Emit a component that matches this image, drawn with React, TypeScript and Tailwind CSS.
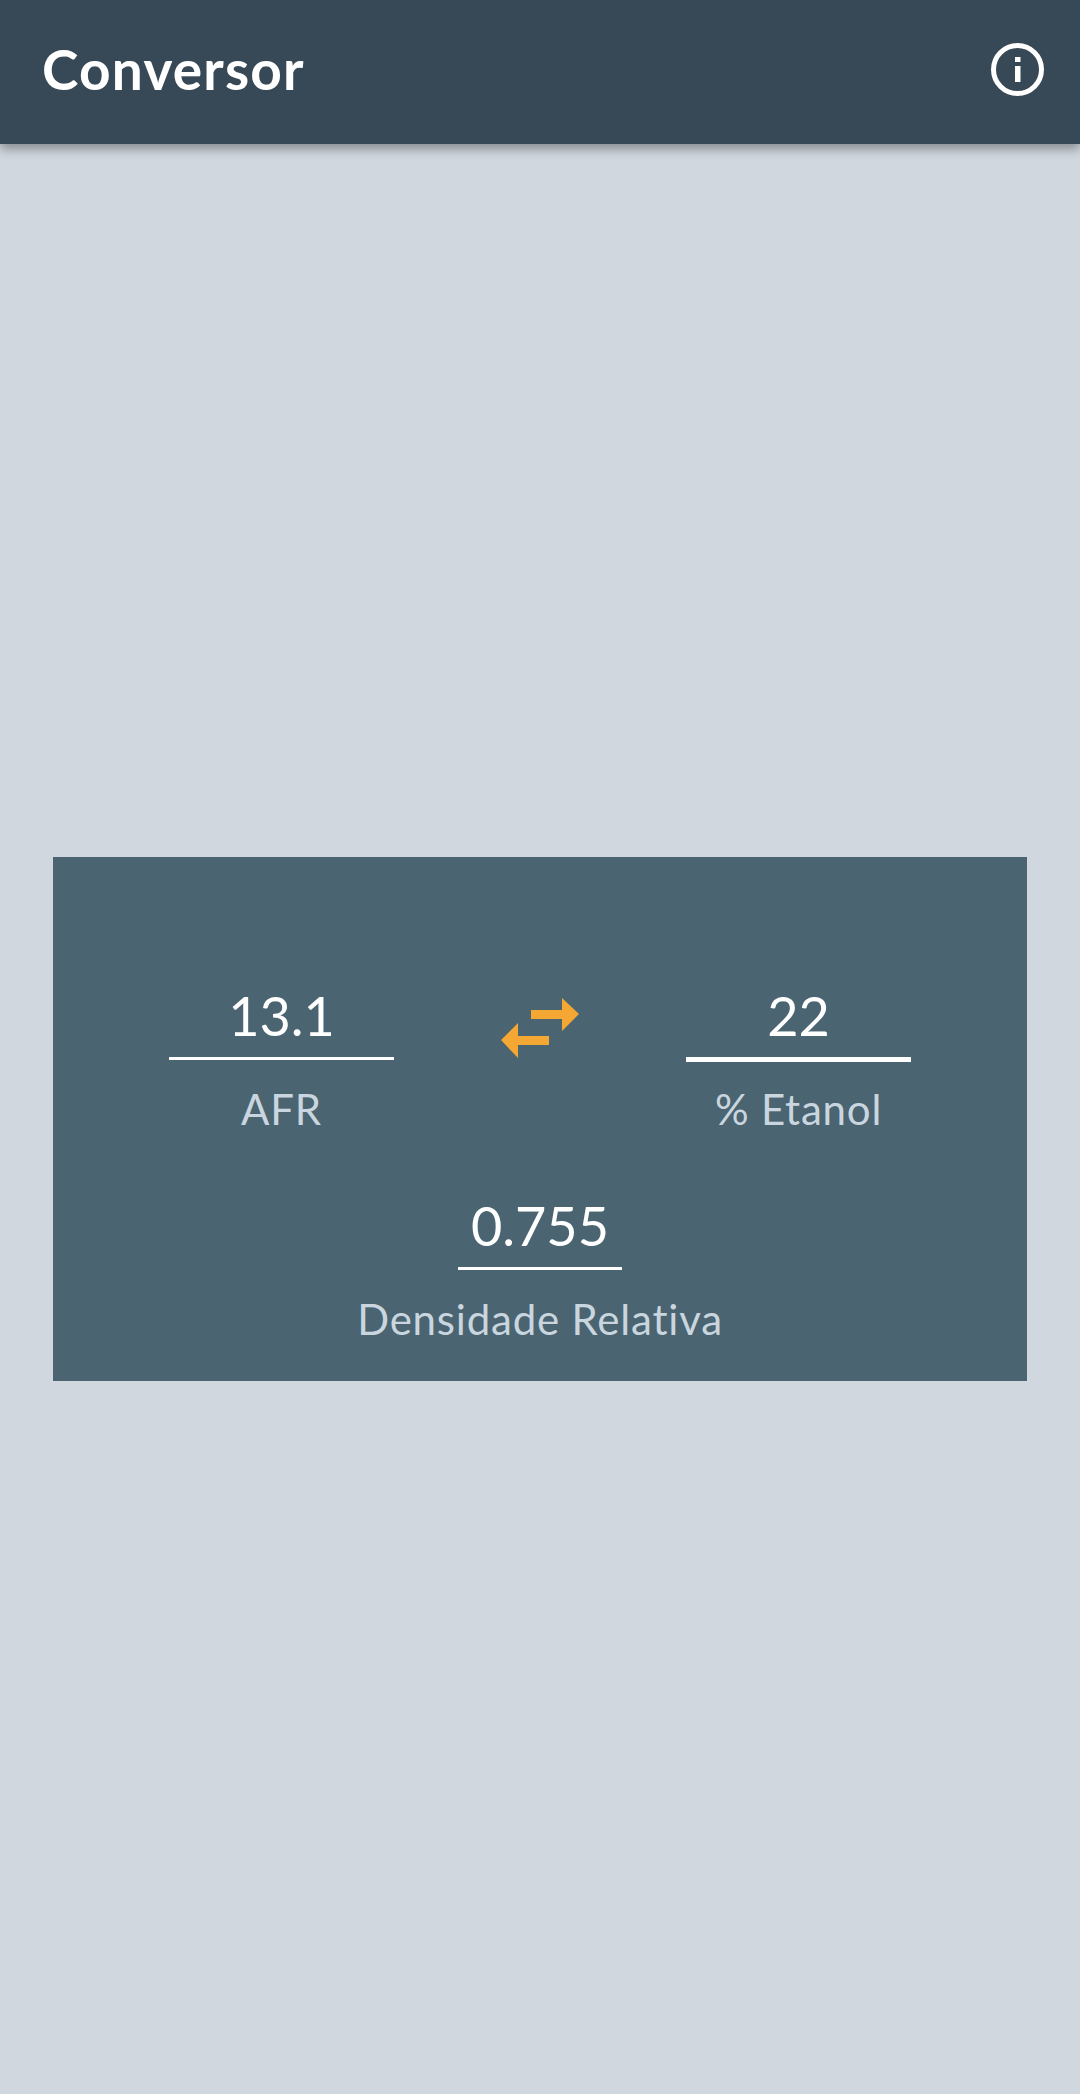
const font = "font-['Lato',sans-serif]";

const Field = ({ value, label, width, thick = false }: { value: string, label: string, width: string, thick?: boolean }) => (
    <div className="flex flex-col items-center">
        <div className={`${width} h-[54px] flex items-center justify-center text-[54px] leading-none text-white`}>{value}</div>
        <div className={`${width} ${thick ? "h-[5px] mt-[14px]" : "h-[3px] mt-[14px] mb-[2px]"} bg-white`} />
        <div className="mt-[27px] h-[40px] flex items-center whitespace-nowrap text-[42px] leading-none tracking-[0.8px] text-[#c9d6df]">{label}</div>
    </div>
);

export default function App() {
    return (
        <div className={`${font} w-[1080px] h-[2094px] flex flex-col bg-[#d0d7df]`}>
            <header className="h-[144px] shrink-0 flex items-center justify-between pl-[42px] pr-[36px] pb-[5px] bg-[#374956] shadow-[0_5px_10px_rgba(0,0,0,0.35)] z-10">
                <h1 className="text-[55px] font-bold leading-none tracking-[1.2px] text-white">Conversor</h1>
                <svg width="53" height="53" viewBox="0 0 53 53" fill="none" aria-label="info">
                    <circle cx="26.5" cy="26.5" r="24" stroke="white" strokeWidth="5" />
                    <rect x="24" y="14" width="5.5" height="5" fill="white" />
                    <rect x="24" y="23" width="5.5" height="16" fill="white" />
                </svg>
            </header>
            <main className="flex-1 flex items-center justify-center">
                <section className="w-[974px] h-[524px] flex flex-col items-center pt-[132px] bg-[#4b6471]">
                    <div className="flex items-start justify-center">
                        <Field value="13.1" label="AFR" width="w-[225px]" />
                        <div className="w-[292px] h-[72px] flex items-center justify-center">
                            <svg width="80" height="62" viewBox="0 0 80 62" fill="#f5a733" className="mt-[6px]">
                                <path d="M31 13h31V1l17 16-17 17V22H31z" />
                                <path d="M49 39H18V26L1 43l17 18V48h31z" />
                            </svg>
                        </div>
                        <Field value="22" label="% Etanol" width="w-[225px]" thick />
                    </div>
                    <div className="mt-[70px]">
                        <Field value="0.755" label="Densidade Relativa" width="w-[164px]" />
                    </div>
                </section>
            </main>
        </div>
    );
}
